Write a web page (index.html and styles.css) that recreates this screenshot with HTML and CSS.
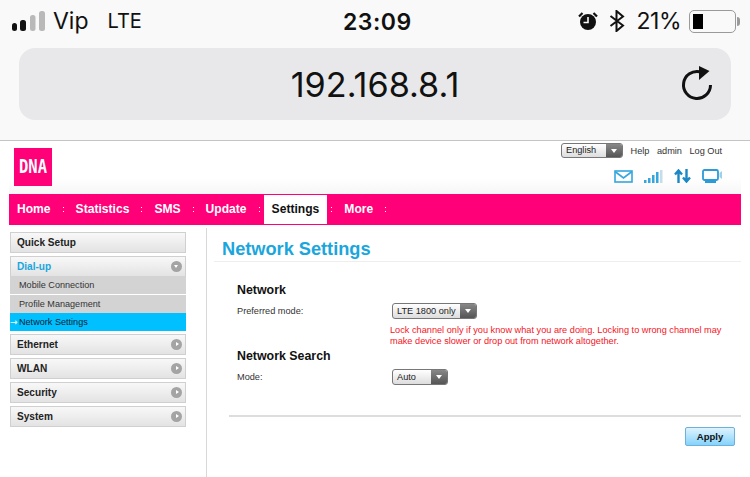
FILE: index.html
```html
<!DOCTYPE html>
<html lang="en">
<head>
    <meta charset="UTF-8">
    <meta name="viewport" content="width=device-width, initial-scale=1.0">
    <title>Network Settings</title>
    <link rel="stylesheet" href="styles.css">
</head>
<body>
    <!-- Phone browser chrome -->
    <div class="browser">
        <div class="status-bar">
            <div class="status-left">
                <svg class="signal" width="33" height="20" viewBox="0 0 33 20">
                    <rect x="0" y="12" width="5" height="8" rx="2.5" fill="#111"/>
                    <rect x="8" y="9" width="6" height="11" rx="2.5" fill="#111"/>
                    <rect x="18" y="4" width="5.5" height="16" rx="2.5" fill="#b9b9b9"/>
                    <rect x="27" y="0" width="6" height="20" rx="2.5" fill="#b9b9b9"/>
                </svg>
                <span class="carrier">Vip</span>
                <span class="network-type">LTE</span>
            </div>
            <div class="clock">23:09</div>
            <div class="status-right">
                <svg width="20" height="20" viewBox="0 0 20 20">
                    <circle cx="10" cy="11" r="8" fill="#111"/>
                    <path d="M10 6v5.500H5.500" fill="none" stroke="#f9f9f9" stroke-width="1.600"/>
                    <path d="M1 5.500 4.500 2M19 5.500 15.500 2" stroke="#111" stroke-width="2.200"/>
                </svg>
                <svg class="bluetooth" width="16" height="22" viewBox="0 0 16 22">
                    <path d="M1.500 6 14 15.500 7.500 21V1L14 6.500 1.500 16" fill="none" stroke="#111" stroke-width="2"/>
                </svg>
                <span class="battery-text">21%</span>
                <div class="battery"><div class="battery-level"></div></div>
                <div class="battery-tip"></div>
            </div>
        </div>
        <div class="address-bar">
            <span class="address">192.168.8.1</span>
            <svg class="reload" width="34" height="38" viewBox="0 0 34 38">
                <path d="M30.500 21A13.500 13.500 0 1 1 20 7.800" fill="none" stroke="#111" stroke-width="3"/>
                <path d="M19 2 29.500 7 19 16z" fill="#111"/>
            </svg>
        </div>
    </div>

    <!-- Router page -->
    <div class="page">
        <div class="header">
            <div class="logo"><span>DNA</span></div>
            <div class="header-right">
                <div class="top-links">
                    <div class="select select-lang">
                        <span class="select-text">English</span>
                        <span class="select-arrow"></span>
                    </div>
                    <a>Help</a>
                    <a>admin</a>
                    <a>Log Out</a>
                </div>
                <div class="status-icons">
                    <svg width="19" height="13" viewBox="0 0 19 13">
                        <rect x="1" y="1" width="17" height="11" fill="#fff" stroke="#35a6de" stroke-width="1.600"/>
                        <path d="M1 1.500 9.500 8 18 1.500" fill="none" stroke="#35a6de" stroke-width="1.600"/>
                    </svg>
                    <svg width="19" height="13" viewBox="0 0 19 13">
                        <rect x="0" y="10" width="2.500" height="3" fill="#35a6de"/>
                        <rect x="4" y="8" width="2.500" height="5" fill="#35a6de"/>
                        <rect x="8" y="5" width="2.500" height="8" fill="#35a6de"/>
                        <rect x="12" y="2" width="2.500" height="11" fill="#35a6de"/>
                        <rect x="16" y="0" width="2.500" height="13" fill="#c5dcea"/>
                    </svg>
                    <svg width="17" height="14" viewBox="0 0 17 14">
                        <path d="M4.500 14V3M1 5.500 4.500 1.500 8 5.500M12.500 0V11M9 8.500 12.500 12.500 16 8.500" fill="none" stroke="#1b87c5" stroke-width="2.400"/>
                    </svg>
                    <svg width="22" height="14" viewBox="0 0 22 14">
                        <rect x="1" y="1" width="15" height="10" rx="1.500" fill="#fff" stroke="#2b9cd8" stroke-width="1.800"/>
                        <rect x="3" y="12" width="11" height="2" fill="#2b9cd8"/>
                        <path d="M17.500 4 20 2V10L17.500 8z" fill="#9ccfea"/>
                    </svg>
                </div>
            </div>
        </div>

        <div class="nav">
            <a>Home</a><i></i>
            <a>Statistics</a><i></i>
            <a>SMS</a><i></i>
            <a>Update</a><i></i>
            <a class="active">Settings</a><i></i>
            <a>More</a><i></i>
        </div>

        <div class="main">
            <div class="sidebar">
                <div class="menu-item">Quick Setup</div>
                <div class="menu-group">
                    <div class="menu-item open">Dial-up<span class="dot dot-down"></span></div>
                    <div class="sub-item">Mobile Connection</div>
                    <div class="sub-item">Profile Management</div>
                    <div class="sub-item current">Network Settings</div>
                </div>
                <div class="menu-item">Ethernet<span class="dot"></span></div>
                <div class="menu-item">WLAN<span class="dot"></span></div>
                <div class="menu-item">Security<span class="dot"></span></div>
                <div class="menu-item">System<span class="dot"></span></div>
            </div>

            <div class="content">
                <h1>Network Settings</h1>
                <div class="form">
                    <h2>Network</h2>
                    <div class="form-row">
                        <label>Preferred mode:</label>
                        <div class="select select-mode">
                            <span class="select-text">LTE 1800 only</span>
                            <span class="select-arrow"></span>
                        </div>
                    </div>
                    <p class="warning">Lock channel only if you know what you are doing. Locking to wrong channel may make device slower or drop out from network altogether.</p>
                    <h2 class="search-title">Network Search</h2>
                    <div class="form-row">
                        <label>Mode:</label>
                        <div class="select select-auto">
                            <span class="select-text">Auto</span>
                            <span class="select-arrow"></span>
                        </div>
                    </div>
                </div>
                <div class="actions">
                    <button>Apply</button>
                </div>
            </div>
        </div>
    </div>
</body>
</html>
```

FILE: styles.css
```css
* {
    box-sizing: border-box;
}
body {
    margin: 0;
    width: 750px;
    height: 477px;
    overflow: hidden;
    background-color: white;
    font-family: "Liberation Sans", Arial, sans-serif;
}

/* browser chrome */
.browser {
    height: 141px;
    padding: 0 19px;
    background-color: #f9f9f9;
    border-bottom: 1px solid #c4c4c4;
    font-family: Inter, "Noto Sans", sans-serif;
    color: #111;
}
.status-bar {
    position: relative;
    display: flex;
    justify-content: space-between;
    align-items: center;
    height: 48px;
    padding-bottom: 6px;
}
.status-left {
    display: flex;
    align-items: center;
    margin-left: -7px;
}
.signal {
    margin-right: 8px;
}
.carrier {
    font-size: 23px;
    margin-right: 19px;
}
.network-type {
    font-size: 20px;
}
.clock {
    position: absolute;
    left: 324px;
    top: 8px;
    font-size: 23px;
    font-weight: 600;
    letter-spacing: 0.5px;
}
.status-right {
    display: flex;
    align-items: center;
    margin-right: -9px;
}
.bluetooth {
    margin-left: 11px;
}
.battery-text {
    font-size: 23px;
    margin-left: 12px;
    letter-spacing: -0.5px;
}
.battery {
    width: 47px;
    height: 23px;
    margin-left: 8px;
    padding: 3px;
    border: 1.5px solid #9a9a9a;
    border-radius: 5px;
}
.battery-level {
    width: 10px;
    height: 100%;
    background-color: #000;
}
.battery-tip {
    width: 3px;
    height: 9px;
    margin-left: 1px;
    background-color: #9a9a9a;
    border-radius: 0 3px 3px 0;
}
.address-bar {
    position: relative;
    display: flex;
    justify-content: center;
    align-items: center;
    height: 72px;
    background-color: #e8e8ea;
    border-radius: 16px;
}
.address {
    font-size: 34.200px;
}
.reload {
    position: absolute;
    right: 17px;
    top: 16px;
}

/* router page */
.page {
    padding: 0 9px;
    background-color: white;
}
.header {
    display: flex;
    justify-content: space-between;
    height: 53px;
    padding: 7px 0 0 5px;
    background: linear-gradient(#fff 70%, #f6f6f6);
}
.logo {
    display: flex;
    justify-content: center;
    align-items: center;
    width: 38px;
    height: 38px;
    background-color: #ff0078;
    color: white;
    font-family: "DejaVu Sans Mono", monospace;
    font-size: 15.500px;
    font-weight: bold;
}
.logo span {
    transform: scaleY(1.25);
}
.header-right {
    width: 182px;
}
.top-links {
    display: flex;
    align-items: center;
    margin-top: -5px;
    font-size: 9.200px;
    color: #333;
}
.top-links a {
    margin-left: 7.500px;
}
.status-icons {
    display: flex;
    align-items: center;
    gap: 11px;
    margin: 11px 0 0 55px;
}

.select {
    display: flex;
    justify-content: space-between;
    height: 16px;
    border: 1px solid #777;
    border-radius: 3px;
    background: linear-gradient(#fff, #ddd);
    font-size: 9.200px;
    color: #222;
    overflow: hidden;
}
.select-text {
    padding-left: 4px;
    line-height: 14px;
    white-space: nowrap;
}
.select-arrow {
    position: relative;
    width: 16px;
    background: linear-gradient(#888, #555);
}
.select-arrow::after {
    content: "";
    position: absolute;
    left: 5px;
    top: 5px;
    border-left: 3px solid transparent;
    border-right: 3px solid transparent;
    border-top: 4px solid white;
}
.select-lang {
    width: 62px;
    height: 15px;
    margin-left: 2px;
}
.select-lang .select-text {
    line-height: 13px;
}
.select-mode {
    width: 85px;
}
.select-auto {
    width: 56px;
}

.nav {
    display: flex;
    align-items: center;
    height: 31px;
    width: 732px;
    background-color: #ff0078;
}
.nav a {
    padding: 0 8px;
    color: white;
    font-size: 12.100px;
    font-weight: bold;
    line-height: 29px;
}
.nav a.active {
    background-color: white;
    color: #111;
}
.nav i {
    width: 1px;
    height: 5px;
    margin: 0 4px;
    border-top: 1px dotted #fff;
    border-bottom: 1px dotted #fff;
}

.main {
    display: flex;
    align-items: flex-start;
    margin-top: 3px;
}
.sidebar {
    width: 176px;
    margin: 4px 20px 0 1px;
    display: flex;
    flex-direction: column;
    gap: 3px;
}
.menu-item {
    display: flex;
    justify-content: space-between;
    align-items: center;
    height: 21px;
    padding: 0 3px 1px 6px;
    border: 1px solid #d0d0d0;
    background: linear-gradient(#f8f8f8, #e3e3e3);
    font-size: 10.100px;
    font-weight: bold;
    color: #222;
}
.menu-item.open {
    height: 20px;
    border-bottom: 0;
    color: #1aa6dd;
}
.dot {
    position: relative;
    width: 11px;
    height: 11px;
    border-radius: 50%;
    background-color: #a4a4a4;
}
.dot::after {
    content: "";
    position: absolute;
    left: 4.500px;
    top: 3px;
    border-top: 2.500px solid transparent;
    border-bottom: 2.500px solid transparent;
    border-left: 3px solid white;
}
.dot-down::after {
    left: 3px;
    top: 4.500px;
    border-left: 2.500px solid transparent;
    border-right: 2.500px solid transparent;
    border-top: 3px solid white;
    border-bottom: 0;
}
.sub-item {
    height: 18px;
    padding-left: 9px;
    background-color: #d3d3d3;
    font-size: 9.100px;
    line-height: 18px;
    color: #333;
}
.open + .sub-item {
    margin-bottom: 1px;
}
.sub-item.current {
    position: relative;
    background-color: #00c0ff;
    color: #123;
}
.sub-item.current::before {
    content: "→";
    position: absolute;
    left: 0;
    top: 0;
    font-family: "DejaVu Sans", sans-serif;
    font-size: 9px;
    font-weight: bold;
    color: #d8f6ff;
}

.content {
    width: 535px;
    height: 252px;
    padding: 0 0 0 7px;
    border-left: 1px solid #d8d8d8;
}
h1 {
    height: 34px;
    margin: 0;
    padding: 9px 0 0 8px;
    font-size: 18.200px;
    line-height: 24px;
    color: #1aa6dd;
    border-bottom: 1px solid #eee;
}
h2 {
    margin: 0;
    font-size: 12.400px;
    line-height: 16px;
    color: #111;
}
.form {
    padding: 20px 0 0 23px;
}
.form-row {
    display: flex;
    align-items: center;
    margin-top: 5px;
}
.form-row label {
    width: 155px;
    font-size: 9.200px;
    color: #333;
}
.warning {
    width: 340px;
    margin: 6px 0 0 153px;
    font-size: 9.200px;
    line-height: 11px;
    color: #f5141e;
}
.search-title {
    margin-top: 1px;
}
.actions {
    display: flex;
    justify-content: flex-end;
    margin: 30px 0 0 15px;
    padding: 10px 6px 0 0;
    border-top: 2px solid #ddd;
}
button {
    width: 50px;
    height: 19px;
    padding: 0;
    border: 1px solid #6db0da;
    border-radius: 2px;
    background: linear-gradient(#dff3fe, #85d3fb);
    color: #111;
    font-family: "Liberation Sans", Arial, sans-serif;
    font-size: 9.500px;
    font-weight: bold;
}
```
